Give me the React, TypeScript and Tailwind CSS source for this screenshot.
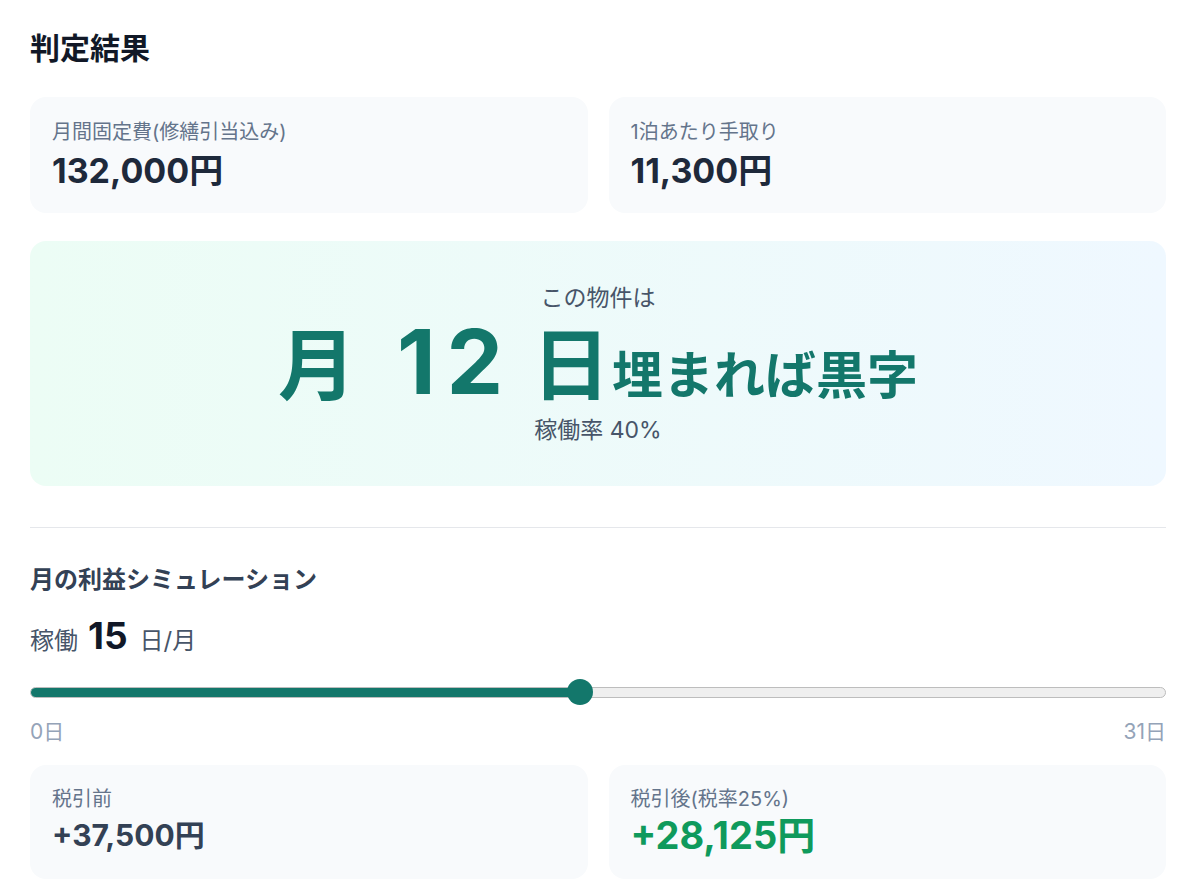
import React from "react";

const font = { fontFamily: 'Inter, "Noto Sans CJK JP", "Noto Sans", sans-serif' };

function StatCard({
    label,
    value,
    valueClass,
    labelPad = "pt-[21px]",
}: {
    label: string;
    value: string;
    valueClass: string;
    labelPad?: string;
}) {
    return (
        <div className={`flex-1 rounded-2xl bg-[#f8fafc] px-[22px] pb-[22px] ${labelPad}`}>
            <div className="text-[20px] leading-7 text-[#64748b]">{label}</div>
            <div className={`font-bold ${valueClass}`}>{value}</div>
        </div>
    );
}

export default function App() {
    const days = 15;
    const max = 31;
    const pct = (days / max) * 100;

    return (
        <div className="min-h-[896px] w-[1200px] bg-white pl-[30px] pr-[34px] pt-[28px]" style={font}>
            <h1 className="text-[30px] font-bold leading-10 text-[#111827]">判定結果</h1>

            {/* Summary cards */}
            <div className="mt-[29px] flex gap-[21px]">
                <StatCard label="月間固定費(修繕引当込み)" value="132,000円" valueClass="mt-[5px] text-[34px] leading-10 text-[#1e293b]" />
                <StatCard label="1泊あたり手取り" value="11,300円" valueClass="mt-[5px] text-[34px] leading-10 text-[#1e293b]" />
            </div>

            {/* Break-even panel */}
            <div className="mt-[28px] flex flex-col items-center rounded-2xl bg-gradient-to-r from-[#ecfdf5] to-[#eff8ff] pt-[41px] pb-[40px]">
                <div className="text-[23px] leading-8 text-[#475569]">この物件は</div>
                <div className="mt-[3px] flex items-baseline text-[#13776b]">
                    <span className="text-[78px] font-bold leading-none">月</span>
                    <span className="ml-[41px] text-[90px] font-bold leading-none tracking-[0.12em]">12</span>
                    <span className="ml-[18px] text-[78px] font-bold leading-none">日</span>
                    <span className="ml-[2px] text-[51px] font-bold leading-none">埋まれば黒字</span>
                </div>
                <div className="mt-[7px] text-[23px] leading-8 text-[#475569]">稼働率 40%</div>
            </div>

            <div className="mt-[41px] h-px bg-[#e5e7eb]" />

            {/* Simulation */}
            <h2 className="mt-[36px] text-[24px] font-bold leading-8 text-[#334155]">月の利益シミュレーション</h2>
            <div className="mt-[20px] flex items-baseline leading-10 text-[#475569]">
                <span className="text-[24px]">稼働</span>
                <span className="ml-[10px] text-[37px] font-bold text-[#111827]">{days}</span>
                <span className="ml-[12px] text-[24px]">日/月</span>
            </div>

            <div className="relative mt-[19px] flex h-6 items-center">
                <div className="relative h-[11px] w-full overflow-hidden rounded-full border border-[#bdbdbd] bg-[#efefef]">
                    <div className="absolute inset-y-[-1px] left-0 bg-[#13776b]" style={{ width: `${pct}%` }} />
                </div>
                <div
                    className="absolute top-[-1px] h-[26px] w-[26px] -translate-x-1/2 rounded-full bg-[#13776b]"
                    style={{ left: `${pct}%` }}
                />
            </div>
            <div className="mt-[14px] flex justify-between text-[21px] leading-7 text-[#94a3b8]">
                <span>0日</span>
                <span>31日</span>
            </div>

            <div className="mt-[19px] flex gap-[21px]">
                <StatCard label="税引前" value="+37,500円" labelPad="pt-[20px]" valueClass="text-[30px] leading-[44px] text-[#334155]" />
                <StatCard label="税引後(税率25%)" value="+28,125円" labelPad="pt-[20px]" valueClass="text-[38px] leading-[44px] text-[#0f9a5c]" />
            </div>
        </div>
    );
}
